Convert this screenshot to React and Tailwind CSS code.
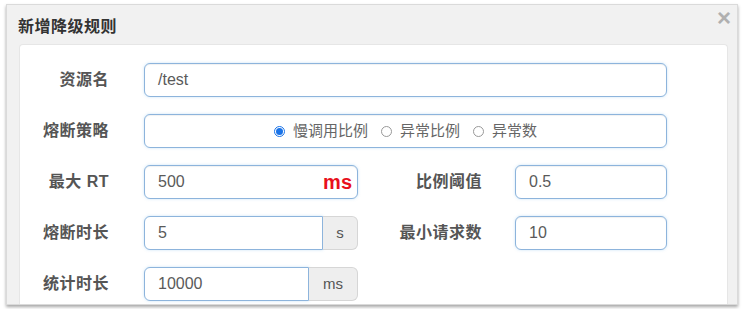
const cjk = { fontFamily: '"Liberation Sans", "Noto Sans CJK SC", sans-serif' };

const inputBox =
  'h-[34px] border border-[#8db4dc] bg-white rounded-[6px] shadow-[inset_0_1px_1px_rgba(0,0,0,0.06),0_0_3px_rgba(102,175,233,0.35)]';

function Label({ children, width }) {
  return (
    <div
      className={`${width} shrink-0 text-right text-[16px] font-bold text-[#555] tracking-[0.5px]`}
    >
      {children}
    </div>
  );
}

function TextInput({ value, className = '', suffix }) {
  return (
    <div className={`${inputBox} ${className} flex items-center px-[13px]`}>
      <span className="flex-1 text-[16px] text-[#5a5a5a]">{value}</span>
      {suffix}
    </div>
  );
}

function AddonInput({ value, addon, inputWidth, addonWidth }) {
  return (
    <div className="flex h-[34px] w-[214px]">
      <div
        className={`${inputWidth} h-full flex items-center px-[13px] bg-white border border-[#8db4dc] rounded-l-[6px] shadow-[0_0_3px_rgba(102,175,233,0.35)]`}
      >
        <span className="text-[16px] text-[#5a5a5a]">{value}</span>
      </div>
      <div
        className={`${addonWidth} h-full flex items-center justify-center bg-[#eeeeee] border border-l-0 border-[#d6d6d6] rounded-r-[6px] text-[15px] text-[#555]`}
      >
        {addon}
      </div>
    </div>
  );
}

function Radio({ checked, label }) {
  return (
    <label className="flex items-center gap-[8px]">
      <span
        className={`w-[11px] h-[11px] rounded-full border flex items-center justify-center bg-white ${
          checked ? 'border-[#1a73e8]' : 'border-[#999]'
        }`}
      >
        {checked && <span className="w-[7px] h-[7px] rounded-full bg-[#1a73e8]" />}
      </span>
      <span className="text-[15px] text-[#666]">{label}</span>
    </label>
  );
}

export default function App() {
  return (
    <div className="w-[742px] h-[309px] bg-white pl-[6px] pt-[4px] overflow-hidden" style={cjk}>
      <div className="w-[732px] h-[301px] bg-[#f1f1f1] border border-[#dadada] shadow-[0_2px_3px_rgba(0,0,0,0.35)] flex flex-col overflow-hidden">
        {/* Header */}
        <div className="h-[39px] shrink-0 flex items-start justify-between pl-[11px] pr-[6px]">
          <h3 className="mt-[14px] text-[16px] font-bold text-[#333] tracking-[0.5px] leading-none">
            新增降级规则
          </h3>
          <span className="mt-[1px] text-[24px] font-bold leading-none text-[#b0b0b0]">×</span>
        </div>

        {/* Body */}
        <div className="ml-[12px] w-[709px] flex-1 bg-white rounded-t-[4px] border-t border-x border-[#e6e6e6] pt-[18px] flex flex-col gap-[17px]">
          <div className="flex items-center">
            <Label width="w-[89px]">资源名</Label>
            <TextInput value="/test" className="ml-[35px] w-[523px]" />
          </div>

          <div className="flex items-center">
            <Label width="w-[89px]">熔断策略</Label>
            <div className={`${inputBox} ml-[35px] w-[523px] flex items-center justify-center gap-[13px]`}>
              <Radio checked label="慢调用比例" />
              <Radio label="异常比例" />
              <Radio label="异常数" />
            </div>
          </div>

          <div className="flex items-center">
            <Label width="w-[89px]">最大 RT</Label>
            <TextInput
              value="500"
              className="ml-[35px] w-[214px] pr-[5px]"
              suffix={<span className="text-[20px] font-bold text-[#e8101b]">ms</span>}
            />
            <Label width="w-[124px]">比例阈值</Label>
            <TextInput value="0.5" className="ml-[33px] w-[152px]" />
          </div>

          <div className="flex items-center">
            <Label width="w-[89px]">熔断时长</Label>
            <div className="ml-[35px]">
              <AddonInput value="5" addon="s" inputWidth="w-[179px]" addonWidth="w-[35px]" />
            </div>
            <Label width="w-[124px]">最小请求数</Label>
            <TextInput value="10" className="ml-[33px] w-[152px]" />
          </div>

          <div className="flex items-center">
            <Label width="w-[89px]">统计时长</Label>
            <div className="ml-[35px]">
              <AddonInput value="10000" addon="ms" inputWidth="w-[165px]" addonWidth="w-[49px]" />
            </div>
          </div>
        </div>
      </div>
    </div>
  );
}
